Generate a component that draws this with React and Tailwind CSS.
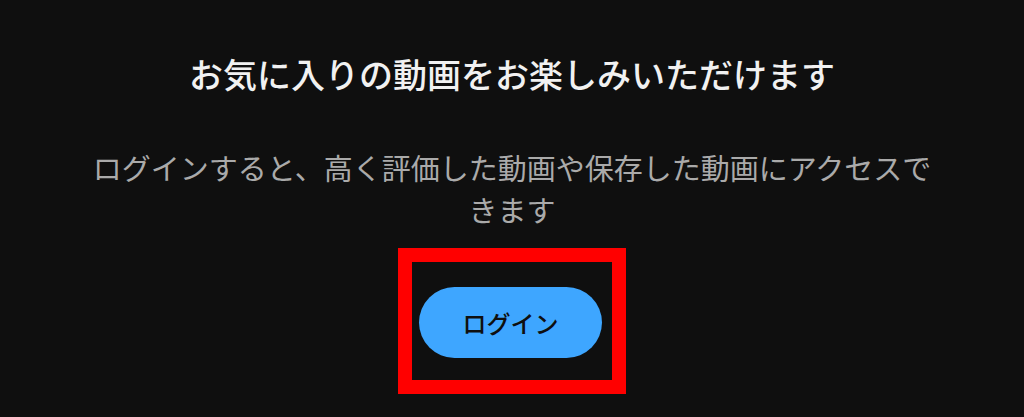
export default function App() {
  return (
    <div
      className="w-[1024px] h-[417px] bg-[#0f0f0f] flex flex-col items-center overflow-hidden"
      style={{ fontFamily: '"Noto Sans CJK JP", "Noto Sans", sans-serif' }}
    >
      <h1 className="mt-[50px] text-[34px] leading-[48px] font-medium text-[#f1f1f1]">
        お気に入りの動画をお楽しみいただけます
      </h1>
      <p className="mt-[48px] w-[860px] text-center text-[29px] leading-[42px] text-[#aaaaaa]">
        ログインすると、高く評価した動画や保存した動画にアクセスできます
      </p>
      <div className="mt-[18px] border-[14px] border-[#ff0000] pt-[25px] pb-[22px] pl-[7px] pr-[10px]">
        <button className="w-[183px] h-[71px] rounded-full bg-[#3ea6ff] text-[#0f0f0f] text-[24px] font-medium">
          ログイン
        </button>
      </div>
    </div>
  );
}
